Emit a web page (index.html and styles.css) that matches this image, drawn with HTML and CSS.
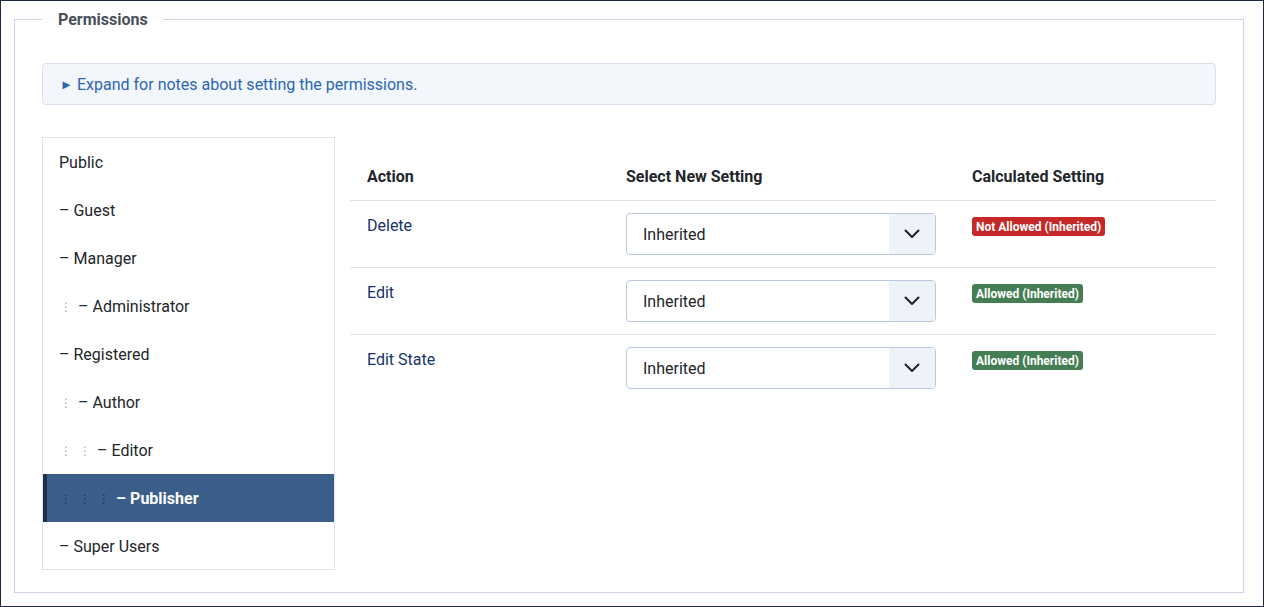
FILE: index.html
```html
<!DOCTYPE html>
<html lang="en">
<head>
<meta charset="utf-8">
<title>Permissions</title>
<link rel="stylesheet" href="styles.css">
</head>
<body>
<div class="frame">
  <fieldset class="perm">
    <legend class="perm-legend">Permissions</legend>
    <div class="notes"><span class="tri">&#9658;</span><span class="notes-text">Expand for notes about setting the permissions.</span></div>
    <div class="layout">
      <ul class="tree">
        <li class="node">Public</li>
        <li class="node">– Guest</li>
        <li class="node">– Manager</li>
        <li class="node"><span class="lvl">⋮</span>– Administrator</li>
        <li class="node">– Registered</li>
        <li class="node"><span class="lvl">⋮</span>– Author</li>
        <li class="node"><span class="lvl">⋮</span><span class="lvl">⋮</span>– Editor</li>
        <li class="node active"><span class="lvl">⋮</span><span class="lvl">⋮</span><span class="lvl">⋮</span>– Publisher</li>
        <li class="node">– Super Users</li>
      </ul>
      <div class="table">
        <div class="row head">
          <div class="cell">Action</div>
          <div class="cell">Select New Setting</div>
          <div class="cell">Calculated Setting</div>
        </div>
        <div class="row">
          <div class="cell text"><a class="action">Delete</a></div>
          <div class="cell"><div class="select"><span class="sel-text">Inherited</span><span class="sel-btn"><svg width="16" height="10" viewBox="0 0 16 10"><path d="M1.5 1.5 L8 8 L14.5 1.5" fill="none" stroke="#1d2024" stroke-width="2" stroke-linecap="round" stroke-linejoin="round"/></svg></span></div></div>
          <div class="cell"><span class="badge deny">Not Allowed (Inherited)</span></div>
        </div>
        <div class="row">
          <div class="cell text"><a class="action">Edit</a></div>
          <div class="cell"><div class="select"><span class="sel-text">Inherited</span><span class="sel-btn"><svg width="16" height="10" viewBox="0 0 16 10"><path d="M1.5 1.5 L8 8 L14.5 1.5" fill="none" stroke="#1d2024" stroke-width="2" stroke-linecap="round" stroke-linejoin="round"/></svg></span></div></div>
          <div class="cell"><span class="badge allow">Allowed (Inherited)</span></div>
        </div>
        <div class="row last">
          <div class="cell text"><a class="action">Edit State</a></div>
          <div class="cell"><div class="select"><span class="sel-text">Inherited</span><span class="sel-btn"><svg width="16" height="10" viewBox="0 0 16 10"><path d="M1.5 1.5 L8 8 L14.5 1.5" fill="none" stroke="#1d2024" stroke-width="2" stroke-linecap="round" stroke-linejoin="round"/></svg></span></div></div>
          <div class="cell"><span class="badge allow">Allowed (Inherited)</span></div>
        </div>
      </div>
    </div>
  </fieldset>
</div>
</body>
</html>
```

FILE: styles.css
```css
* { box-sizing: border-box; }
html, body { margin: 0; padding: 0; }
body {
  font-family: Roboto, "Liberation Sans", Arial, sans-serif;
  font-size: 16px;
  line-height: 1.5;
  color: #22262a;
  background: #fdfdfd;
}
.frame {
  width: 1264px;
  height: 607px;
  border: 1px solid #1b2a40;
  padding: 5px 19px 13px 13px;
  background: #fdfdfd;
}
.perm {
  margin: 0;
  height: 587px;
  border: 1px solid #cbd5e3;
  padding: 31px 27px 22px 27px;
  background: #fff;
}
.perm-legend {
  padding: 2px 15px 0 16px;
  font-weight: 700;
  font-size: 16px;
  line-height: 24px;
  color: #495057;
}
.notes {
  height: 42px;
  display: flex;
  align-items: center;
  padding-left: 17px;
  padding-top: 2px;
  background: #f3f6fa;
  border: 1px solid #d8e0ec;
  border-radius: 4px;
  color: #2a66b4;
}
.tri { font-size: 13px; width: 17px; line-height: 1; margin-top: -2px; }
.notes-text { font-size: 16px; }
.layout {
  margin-top: 32px;
  display: flex;
  gap: 15px;
  align-items: flex-start;
}
.tree {
  list-style: none;
  margin: 0;
  padding: 0;
  width: 293px;
  border: 1px solid #dfe3e8;
  background: #fff;
}
.node {
  height: 48px;
  display: flex;
  align-items: center;
  padding-left: 16px;
  padding-top: 2px;
  color: #22262a;
}
.node:last-child { height: 47px; }
.lvl {
  width: 19px;
  font-family: "DejaVu Sans", sans-serif;
  font-size: 12px;
  color: #a8adb3;
  padding-left: 1px;
}
.node.active {
  background: #3c5e8b;
  color: #fff;
  font-weight: 700;
  border-left: 4px solid #1f2f47;
  padding-left: 12px;
}
.node.active .lvl { color: #1f2f47; font-weight: 400; }
.table { flex: 1; }
.row {
  display: grid;
  grid-template-columns: 259px 346px 1fr;
  border-bottom: 1px solid #dee2e6;
}
.row.last { border-bottom: none; }
.cell { padding: 12px 17px; }
.cell.text { padding-top: 13px; padding-bottom: 11px; }
.row.head .cell {
  font-weight: 700;
  padding-top: 28px;
  padding-bottom: 11px;
}
.action { color: #15346a; text-decoration: none; }
.select {
  height: 42px;
  width: 310px;
  display: flex;
  border: 1px solid #b9c8de;
  border-radius: 4px;
  overflow: hidden;
  background: #fff;
}
.sel-text { flex: 1; display: flex; align-items: center; padding-left: 16px; padding-top: 2px; }
.sel-btn {
  width: 46px;
  background: #eef3fa;
  display: flex;
  align-items: center;
  justify-content: center;
}
.badge {
  display: inline-block;
  margin-top: 4px;
  padding: 0 4px;
  height: 19px;
  line-height: 20px;
  font-size: 12px;
  font-weight: 700;
  color: #fff;
  border-radius: 3px;
  vertical-align: top;
}
.badge.deny { background: #c52827; }
.badge.allow { background: #457d54; }
```
